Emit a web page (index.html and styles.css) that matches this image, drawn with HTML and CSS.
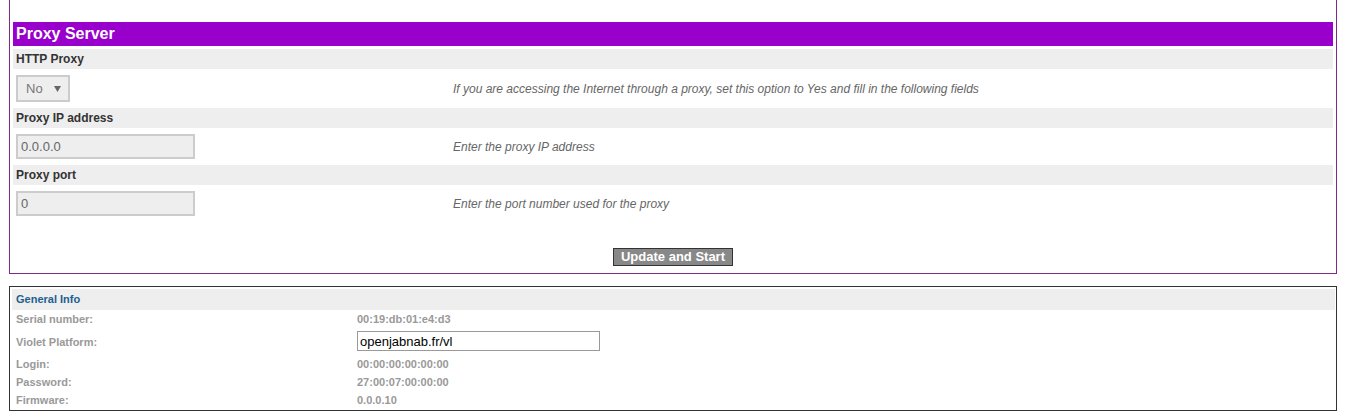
FILE: index.html
```html
<!DOCTYPE html>
<html>
<head>
<meta charset="utf-8">
<title>Proxy Server</title>
<link rel="stylesheet" href="styles.css">
</head>
<body>
<div class="proxy-box">
  <div class="section-title">Proxy Server</div>

  <div class="label-row">HTTP Proxy</div>
  <div class="field-row">
    <div class="field-cell">
      <div class="select">
        <span class="select-value">No</span>
        <svg class="select-arrow" width="7" height="6" viewBox="0 0 7 6"><path d="M0 0 H7 L3.5 6 Z" fill="#666"/></svg>
      </div>
    </div>
    <div class="desc">If you are accessing the Internet through a proxy, set this option to Yes and fill in the following fields</div>
  </div>

  <div class="label-row">Proxy IP address</div>
  <div class="field-row">
    <div class="field-cell"><input class="text-input" type="text" value="0.0.0.0" disabled></div>
    <div class="desc">Enter the proxy IP address</div>
  </div>

  <div class="label-row">Proxy port</div>
  <div class="field-row">
    <div class="field-cell"><input class="text-input" type="text" value="0" disabled></div>
    <div class="desc">Enter the port number used for the proxy</div>
  </div>

  <div class="actions">
    <button class="btn" type="button">Update and Start</button>
  </div>
</div>

<div class="info-box">
  <div class="info-title">General Info</div>
  <div class="info-row"><div class="info-label">Serial number:</div><div class="info-value">00:19:db:01:e4:d3</div></div>
  <div class="info-row info-row-input"><div class="info-label">Violet Platform:</div><div><input class="platform-input" type="text" value="openjabnab.fr/vl"></div></div>
  <div class="info-row"><div class="info-label">Login:</div><div class="info-value">00:00:00:00:00:00</div></div>
  <div class="info-row"><div class="info-label">Password:</div><div class="info-value">27:00:07:00:00:00</div></div>
  <div class="info-row"><div class="info-label">Firmware:</div><div class="info-value">0.0.0.10</div></div>
</div>
</body>
</html>
```

FILE: styles.css
```css
html, body {
  margin: 0;
  padding: 0;
  background: #fff;
  font-family: "Liberation Sans", Arial, sans-serif;
  overflow: hidden;
}

.proxy-box {
  margin: -1px 11px 0 9px;
  border: 1px solid #7d2a8c;
  padding: 22px 3px 7px 3px;
}

.section-title {
  height: 24px;
  line-height: 24px;
  background: #9900cc;
  color: #fff;
  font-size: 16px;
  font-weight: bold;
  padding-left: 3px;
}

.label-row {
  margin-top: 3px;
  height: 20px;
  line-height: 20px;
  background: #eeeeee;
  color: #333;
  font-size: 12px;
  font-weight: bold;
  padding-left: 3px;
}

.field-row + .label-row {
  margin-top: 0;
}

.field-row {
  display: grid;
  grid-template-columns: 440px 1fr;
  align-items: center;
  padding: 6px 0;
}

.field-cell {
  padding-left: 3px;
  display: flex;
}

.select {
  box-sizing: border-box;
  width: 54px;
  height: 27px;
  border: 2px solid #cccccc;
  background: #eeeeee;
  display: flex;
  align-items: center;
  padding-left: 8px;
  color: #777;
  font-size: 13px;
}

.select-value {
  flex: 1;
}

.select-arrow {
  margin-right: 7px;
}

.text-input {
  box-sizing: border-box;
  width: 179px;
  height: 25px;
  border: 2px solid #cccccc;
  background: #eeeeee;
  color: #666;
  font-family: "Liberation Sans", Arial, sans-serif;
  font-size: 13px;
  padding: 0 0 0 3px;
  margin: 0;
}

.desc {
  font-size: 12px;
  font-style: italic;
  color: #666;
}

.actions {
  display: flex;
  justify-content: center;
  margin-top: 26px;
}

.btn {
  height: 18px;
  padding: 0 7px;
  margin: 0;
  border: 1px solid #333;
  background: #888888;
  color: #fff;
  font-family: "Liberation Sans", Arial, sans-serif;
  font-size: 13px;
  font-weight: bold;
  line-height: 16px;
}

.info-box {
  margin: 12px 11px 0 9px;
  border: 1px solid #333;
  padding: 2px 1px 1px 2px;
}

.info-title {
  height: 21px;
  line-height: 21px;
  background: #eeeeee;
  color: #1d5f8f;
  font-size: 11px;
  font-weight: bold;
  padding-left: 4px;
}

.info-row {
  display: grid;
  grid-template-columns: 345px 1fr;
  align-items: center;
  height: 18px;
  font-size: 11px;
  font-weight: bold;
  color: #999;
}

.info-row-input {
  height: 27px;
}

.info-label {
  padding-left: 4px;
}

.platform-input {
  display: block;
  box-sizing: border-box;
  width: 243px;
  height: 20px;
  margin: -1px 0 0 0;
  border: 1px solid #999;
  background: #fff;
  color: #000;
  font-family: "Liberation Sans", Arial, sans-serif;
  font-size: 13px;
  padding: 0 2px;
}
```
